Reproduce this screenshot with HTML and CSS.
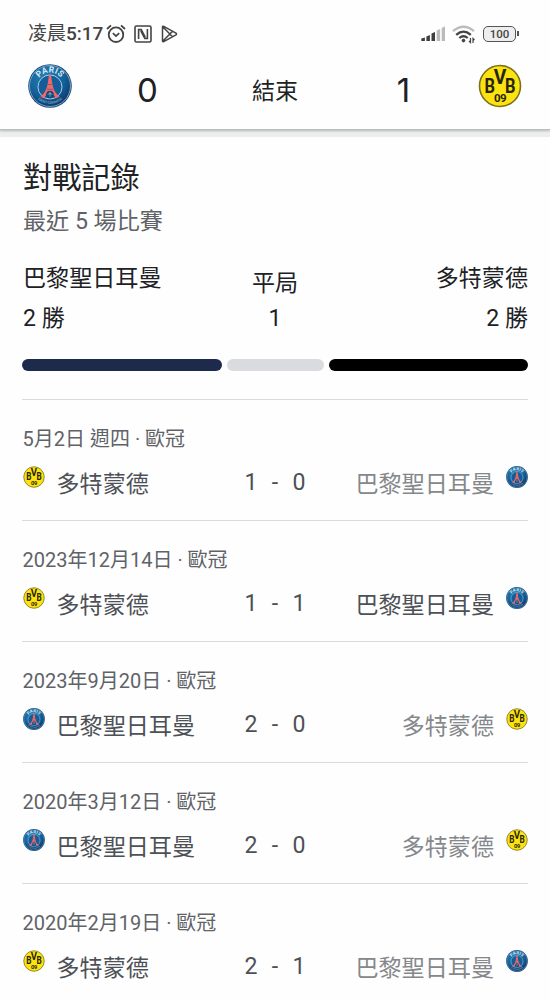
FILE: index.html
```html
<!DOCTYPE html>
<html lang="zh-Hant">
<head>
  <meta charset="UTF-8">
  <meta name="viewport" content="width=device-width, initial-scale=1.0">
  <title>對戰記錄</title>
  <link rel="stylesheet" href="styles.css">
</head>
<body>
  <svg class="defs" width="0" height="0">
    <defs>
      <radialGradient id="psgBlue" cx="0.4" cy="0.3" r="0.75">
        <stop offset="0" stop-color="#2583b8"></stop>
        <stop offset="0.6" stop-color="#14609b"></stop>
        <stop offset="1" stop-color="#0b3567"></stop>
      </radialGradient>
      <path id="arcTop" d="M8.500 22a13.500 13.500 0 0 1 27 0"></path>
      <path id="arcBottom" d="M4 22a18 18 0 0 0 36 0"></path>
    </defs>
    <symbol id="psg" viewBox="0 0 44 44">
      <circle cx="22" cy="22" r="21.8" fill="#174a7d"></circle>
      <circle cx="22" cy="22" r="20.5" fill="url(#psgBlue)" stroke="#91b6cc" stroke-width="0.8"></circle>
      <circle cx="22" cy="23" r="12" fill="#145d98" stroke="#a9cbdc" stroke-width="1"></circle>
      <text class="psg-top" fill="#d4e8f1"><textPath href="#arcTop" startOffset="50%" text-anchor="middle">PARIS</textPath></text>
      <text class="psg-bottom" fill="#86b5d0"><textPath href="#arcBottom" startOffset="50%" text-anchor="middle">SAINT-GERMAIN</textPath></text>
      <path d="M21 11h2l1.100 7.500c1 6 2.800 10.500 7.400 14.300l-3.800 1.600c-1-3.200-2.900-5-5.700-5s-4.700 1.800-5.700 5l-3.800-1.600c4.600-3.800 6.400-8.300 7.400-14.300z" fill="#f0696a"></path>
      <path d="M19 25.300h6M20 20.500h4" stroke="#8e5775" stroke-width="1"></path>
      <circle cx="22" cy="30.500" r="3.800" fill="#164778"></circle>
      <path d="M22 27.800v5M19.700 30.300q2.300-1.500 4.600 0" fill="none" stroke="#a4c6d4" stroke-width="0.700"></path>
    </symbol>
    <symbol id="bvb" viewBox="0 0 44 44">
      <circle cx="22" cy="22" r="20.500" fill="#fbe312" stroke="#7b7118" stroke-width="1.600"></circle>
      <g class="bvb-text" fill="#292508">
        <text x="6.500" y="28.600" font-size="20" textLength="10.500" lengthAdjust="spacingAndGlyphs">B</text>
        <text x="15.700" y="19.600" font-size="20" textLength="12.600" lengthAdjust="spacingAndGlyphs">V</text>
        <text x="27" y="28.600" font-size="20" textLength="10.500" lengthAdjust="spacingAndGlyphs">B</text>
        <text x="16" y="37.700" font-size="11.500" textLength="12.500" lengthAdjust="spacing">09</text>
      </g>
    </symbol>
  </svg>

  <header class="top">
    <div class="status">
      <span class="time">凌晨<b>5:17</b></span>
      <svg class="alarm" width="20" height="20" viewBox="0 0 20 20" fill="none" stroke="#444" stroke-width="1.800">
        <circle cx="10" cy="10.700" r="7.300"></circle>
        <path d="M1 5l4-3.600M19 5l-4-3.600M6.900 9.200l3.100 2.900 3.200-2.900"></path>
      </svg>
      <svg class="nfc" width="18" height="18" viewBox="0 0 18 18" fill="none" stroke="#444" stroke-width="1.600">
        <rect x="1" y="1" width="16" height="16" rx="1.500"></rect>
        <path d="M4.600 14V4.600h2.600l4 7.600M13.400 4v9.400h-2.600l-4-7.600"></path>
      </svg>
      <svg class="play" width="17" height="18" viewBox="0 0 17 18" fill="none" stroke="#444" stroke-width="1.500" stroke-linejoin="round">
        <path d="M1.500 1.700v14.600q.3.800 1.200.3L15 9.800q1-.8 0-1.600L2.700 1.400q-.9-.5-1.200.3zM2 2l9.500 9.700M2 16l9.500-9.700"></path>
      </svg>
      <svg class="signal" width="24" height="16" viewBox="0 0 24 16">
        <path d="M.3 12.500l3.600-1V15H.3zM5.400 10.500l3.500-1.500v6H5.400zM10.500 7.500L14 6v9h-3.500z" fill="#3f3f3f"></path>
        <path d="M15.700 4.500l3.400-1.500v12h-3.400zM20.700 2l3.300-1.700V15h-3.300z" fill="#bbb"></path>
      </svg>
      <svg class="wifi" width="24" height="19" viewBox="0 0 24 19" fill="none" stroke-width="2.300">
        <path d="M1 6.200q10.500-9 21 0" stroke="#bbb"></path>
        <path d="M4.200 9.800q7.300-6.300 14.600 0M7.300 13q4.200-3.600 8.400 0" stroke="#444"></path>
        <circle cx="11.500" cy="15.600" r="1.800" fill="#444"></circle>
        <path d="M18.500 13v4.500l-1.500-1.500M21 18v-4.500l1.500 1.500" stroke="#444" stroke-width="1.200"></path>
      </svg>
      <span class="battery">100</span>
    </div>
    <div class="scoreboard">
      <svg class="crest"><use href="#psg"></use></svg>
      <span class="goals">0</span>
      <span class="state">結束</span>
      <span class="goals">1</span>
      <svg class="crest"><use href="#bvb"></use></svg>
    </div>
  </header>

  <main>
    <h1>對戰記錄</h1>
    <p class="subtitle">最近 5 場比賽</p>

    <section class="summary">
      <div class="side"><div>巴黎聖日耳曼</div><div>2 勝</div></div>
      <div class="side draw"><div>平局</div><div>1</div></div>
      <div class="side right"><div>多特蒙德</div><div>2 勝</div></div>
    </section>
    <div class="bars">
      <div class="bar navy"></div>
      <div class="bar gray"></div>
      <div class="bar black"></div>
    </div>

    <article class="match">
      <div class="date">5月2日 週四 · 歐冠</div>
      <div class="row">
        <div class="team"><svg class="badge"><use href="#bvb"></use></svg><span>多特蒙德</span></div>
        <div class="score">1 - 0</div>
        <div class="team away lost"><span>巴黎聖日耳曼</span><svg class="badge"><use href="#psg"></use></svg></div>
      </div>
    </article>
    <article class="match">
      <div class="date">2023年12月14日 · 歐冠</div>
      <div class="row">
        <div class="team"><svg class="badge"><use href="#bvb"></use></svg><span>多特蒙德</span></div>
        <div class="score">1 - 1</div>
        <div class="team away"><span>巴黎聖日耳曼</span><svg class="badge"><use href="#psg"></use></svg></div>
      </div>
    </article>
    <article class="match">
      <div class="date">2023年9月20日 · 歐冠</div>
      <div class="row">
        <div class="team"><svg class="badge"><use href="#psg"></use></svg><span>巴黎聖日耳曼</span></div>
        <div class="score">2 - 0</div>
        <div class="team away lost"><span>多特蒙德</span><svg class="badge"><use href="#bvb"></use></svg></div>
      </div>
    </article>
    <article class="match">
      <div class="date">2020年3月12日 · 歐冠</div>
      <div class="row">
        <div class="team"><svg class="badge"><use href="#psg"></use></svg><span>巴黎聖日耳曼</span></div>
        <div class="score">2 - 0</div>
        <div class="team away lost"><span>多特蒙德</span><svg class="badge"><use href="#bvb"></use></svg></div>
      </div>
    </article>
    <article class="match">
      <div class="date">2020年2月19日 · 歐冠</div>
      <div class="row">
        <div class="team"><svg class="badge"><use href="#bvb"></use></svg><span>多特蒙德</span></div>
        <div class="score">2 - 1</div>
        <div class="team away lost"><span>巴黎聖日耳曼</span><svg class="badge"><use href="#psg"></use></svg></div>
      </div>
    </article>
  </main>
</body>
</html>
```
FILE: styles.css
```css
* {
  box-sizing: border-box;
}
body {
  margin: 0;
  height: 1000px;
  overflow: hidden;
  background: #fefefe;
  color: #202124;
  font-family: Roboto, "Noto Sans CJK TC", sans-serif;
  font-size: 23.1px;
}
.defs {
  display: block;
}
.top {
  height: 130px;
  background: #fefefe;
  border-bottom: 1px solid #bbbebe;
  box-shadow: 0 1px 2px #b5b8b8, 0 7px 0 #eceeee;
}
.status {
  display: flex;
  align-items: center;
  height: 60px;
  padding: 8px 34px 0 28px;
  color: #444;
}
.time {
  width: 78px;
  font-size: 19px;
  line-height: 24px;
  white-space: nowrap;
}
.time b {
  font-size: 19px;
  font-weight: 500;
}
.nfc {
  margin-left: 8px;
}
.play {
  margin-left: 9px;
}
.signal {
  margin-left: auto;
}
.wifi {
  margin-left: 7px;
}
.battery {
  position: relative;
  width: 33px;
  height: 16px;
  margin-left: 7px;
  border: 1.5px solid #555;
  border-radius: 5px;
  background: #eee;
  font-size: 11.5px;
  font-weight: 500;
  line-height: 15px;
  text-align: center;
}
.battery::after {
  content: "";
  position: absolute;
  right: -4px;
  top: 4px;
  width: 2px;
  height: 5px;
  background: #555;
}
.scoreboard {
  display: grid;
  grid-template-columns: 44px 150px 106px 150px 44px;
  align-items: center;
  height: 60px;
  padding: 0 28px;
}
.crest {
  width: 44px;
  height: 44px;
  margin-top: -9px;
}
.psg-top {
  font-size: 8.5px;
  font-weight: 700;
  letter-spacing: 0.3px;
}
.psg-bottom {
  font-size: 3.6px;
}
.bvb-text {
  font-weight: 700;
}
.goals {
  padding: 0 0 1px 1px;
  font-family: Inter, sans-serif;
  font-size: 33px;
  text-align: center;
}
.state {
  padding-bottom: 2px;
  text-align: center;
}
main {
  padding: 29px 22px 0;
}
h1 {
  margin: 0;
  padding-left: 1px;
  font-size: 29.2px;
  font-weight: 400;
  line-height: 38px;
}
.subtitle {
  margin: 9px 0 0;
  padding-left: 1px;
  color: #5f6368;
  line-height: 32px;
}
.summary {
  display: grid;
  grid-template-columns: 1fr 1fr 1fr;
  margin-top: 21px;
}
.side {
  padding-left: 1px;
  line-height: 40px;
}
.draw {
  padding-left: 0;
  text-align: center;
}
.draw div:first-child {
  padding-top: 5px;
  margin-bottom: -5px;
}
.right {
  text-align: right;
}
.bars {
  display: flex;
  gap: 5px;
  height: 12px;
  margin: 20px 0 28px;
}
.bar {
  border-radius: 6px;
}
.navy {
  width: 200px;
  background: #1e2a4b;
}
.gray {
  width: 97px;
  background: #dadbdf;
}
.black {
  width: 199px;
  background: #000;
}
.match {
  height: 120.9px;
  border-top: 1px solid #dadada;
  padding-top: 24px;
}
.date {
  padding-left: 0.5px;
  color: #5f6368;
  font-size: 20px;
  line-height: 30px;
}
.row {
  display: grid;
  grid-template-columns: 1fr 70px 1fr;
  height: 46px;
  margin-top: 7px;
  color: #4d5156;
  line-height: 47px;
}
.team {
  display: flex;
  gap: 12px;
}
.badge {
  width: 22px;
  height: 22px;
  margin-top: 5px;
}
.team:not(.away) .badge {
  margin-left: 0.5px;
}
.away {
  justify-content: flex-end;
}
.lost span {
  color: #85888b;
}
.score {
  line-height: 44px;
  text-align: center;
  word-spacing: 8.7px;
  white-space: nowrap;
}
```
